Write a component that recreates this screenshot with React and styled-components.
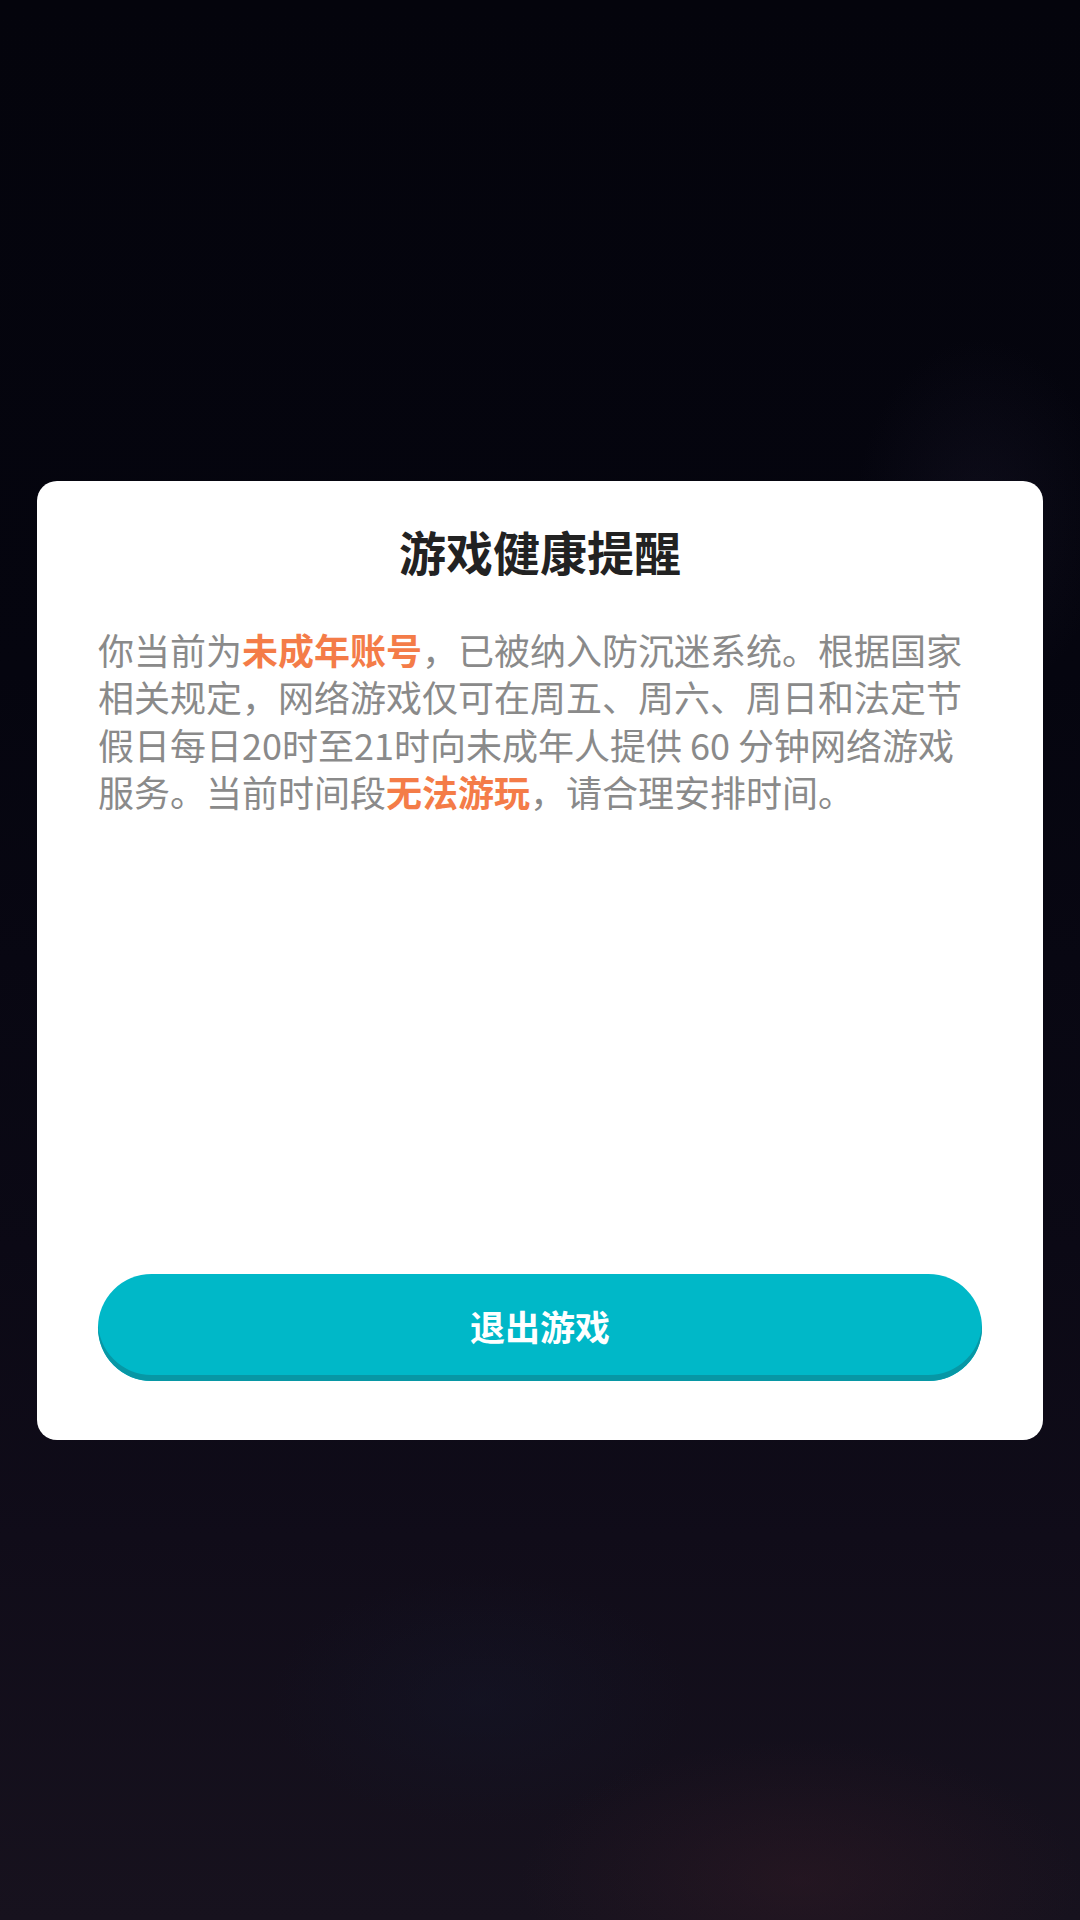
import React from "react";
import styled, { createGlobalStyle } from "styled-components";

const GlobalStyle = createGlobalStyle`
  html, body {
    margin: 0;
    padding: 0;
    background: #07060f;
  }
  * { box-sizing: border-box; }
`;

const Screen = styled.div`
  width: 1080px;
  height: 1920px;
  display: flex;
  align-items: center;
  justify-content: center;
  background:
    radial-gradient(ellipse 180px 260px at 980px 520px, rgba(40, 36, 60, 0.25), transparent 70%),
    radial-gradient(ellipse 400px 200px at 800px 1880px, rgba(60, 30, 40, 0.35), transparent 70%),
    radial-gradient(ellipse 300px 180px at 480px 1700px, rgba(20, 22, 40, 0.5), transparent 70%),
    linear-gradient(180deg, #04040c 0%, #05050f 35%, #0b0915 65%, #100c19 80%, #17121e 100%);
  font-family: "Noto Sans CJK SC", "Noto Sans", sans-serif;
`;

const Card = styled.div`
  width: 1006px;
  height: 959px;
  background: #ffffff;
  border-radius: 20px;
  display: flex;
  flex-direction: column;
  padding: 39px 61px 59px;
`;

const Title = styled.h1`
  margin: 0;
  text-align: center;
  font-size: 47px;
  line-height: 62px;
  font-weight: 700;
  color: #222222;
`;

const Body = styled.p`
  margin: 44px 0 0;
  font-size: 36px;
  line-height: 47.5px;
  color: #8a8a8a;
  font-weight: 400;
`;

const Highlight = styled.span`
  color: #f47c48;
  font-weight: 700;
`;

const ExitButton = styled.button`
  margin-top: auto;
  width: 100%;
  height: 107px;
  border: none;
  border-radius: 54px;
  background: #00b8c8;
  box-shadow: inset 0 -6px 0 #0797a5;
  color: #ffffff;
  font-family: inherit;
  font-size: 35px;
  font-weight: 700;
  padding: 0 0 4px;
  cursor: pointer;
`;

export default function App() {
  return (
    <>
      <GlobalStyle />
      <Screen>
        <Card>
          <Title>游戏健康提醒</Title>
          <Body>
            你当前为<Highlight>未成年账号</Highlight>，已被纳入防沉迷系统。根据国家相关规定，网络游戏仅可在周五、周六、周日和法定节假日每日20时至21时向未成年人提供 60 分钟网络游戏服务。当前时间段<Highlight>无法游玩</Highlight>，请合理安排时间。
          </Body>
          <ExitButton>退出游戏</ExitButton>
        </Card>
      </Screen>
    </>
  );
}
